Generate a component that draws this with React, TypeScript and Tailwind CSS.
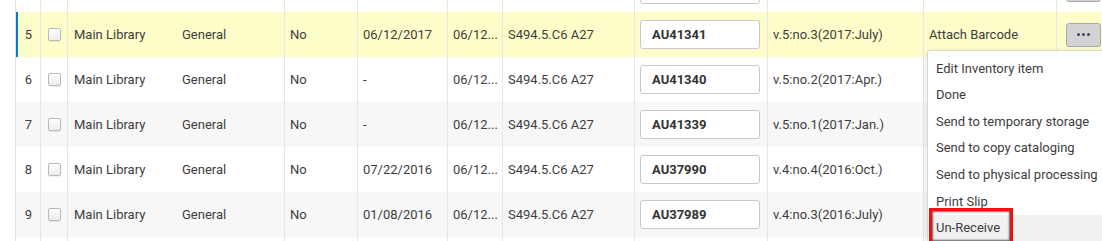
import React from "react";

type Row = {
  n: number;
  date: string;
  barcode: string;
  desc: string;
  process: string;
  bg: string;
  active?: boolean;
  hidden?: boolean;
};

const rows: Row[] = [
  { n: 4, date: "", barcode: "", desc: "", process: "", bg: "bg-white", hidden: true },
  { n: 5, date: "06/12/2017", barcode: "AU41341", desc: "v.5:no.3(2017:July)", process: "Attach Barcode", bg: "bg-[#fdfdca]", active: true },
  { n: 6, date: "-", barcode: "AU41340", desc: "v.5:no.2(2017:Apr.)", process: "", bg: "bg-white" },
  { n: 7, date: "-", barcode: "AU41339", desc: "v.5:no.1(2017:Jan.)", process: "", bg: "bg-[#f7f7f7]" },
  { n: 8, date: "07/22/2016", barcode: "AU37990", desc: "v.4:no.4(2016:Oct.)", process: "", bg: "bg-white" },
  { n: 9, date: "01/08/2016", barcode: "AU37989", desc: "v.4:no.3(2016:July)", process: "", bg: "bg-[#f7f7f7]" },
  { n: 10, date: "", barcode: "", desc: "", process: "", bg: "bg-white", hidden: true },
];

const menuItems = [
  "Edit Inventory item",
  "Done",
  "Send to temporary storage",
  "Send to copy cataloging",
  "Send to physical processing",
  "Print Slip",
  "Un-Receive",
];

function TableRow({ r }: { r: Row }) {
  const h = r.hidden;
  return (
    <div
      className={`flex h-[45px] items-center border-l border-[#e3e3e3] ${r.bg} ${
        r.active ? "shadow-[inset_2px_0_0_#0b78c3]" : ""
      }`}
    >
      <div className="flex h-full w-[25px] shrink-0 items-center justify-center border-r border-[#e6e6e6] pl-[1px]">
        {h ? "" : r.n}
      </div>
      <div className="flex h-full w-[27px] shrink-0 items-center justify-center border-r border-[#e6e6e6] pl-[1px]">
        <div className="h-[13px] w-[13px] rounded-[2px] border border-[#b9b9b9] bg-gradient-to-b from-white to-[#ececec] shadow-[0_1px_1px_rgba(0,0,0,0.08)]" />
      </div>
      <div className="flex h-full w-[108px] shrink-0 items-center pl-[6px]">{h ? "" : "Main Library"}</div>
      <div className="flex h-full w-[109px] shrink-0 items-center border-r border-[#e6e6e6] pl-[6px]">{h ? "" : "General"}</div>
      <div className="flex h-full w-[73px] shrink-0 items-center border-r border-[#e6e6e6] pl-[5px]">{h ? "" : "No"}</div>
      <div className="flex h-full w-[90px] shrink-0 items-center border-r border-[#e6e6e6] pl-[5px]">{r.date}</div>
      <div className="flex h-full w-[55px] shrink-0 items-center overflow-hidden whitespace-nowrap border-r border-[#e6e6e6] pl-[5px]">
        {h ? "" : "06/12..."}
      </div>
      <div className="flex h-full w-[132px] shrink-0 items-center border-r border-[#e6e6e6] pl-[5px]">{h ? "" : "S494.5.C6 A27"}</div>
      <div className="flex h-full w-[133px] shrink-0 items-center border-r border-[#e6e6e6] pl-[5px]">
        <div className="flex h-[29px] w-[120px] items-center rounded-[3px] border border-[#c8c8c8] bg-white pl-[11px] font-bold text-[#333]">
          {r.barcode}
        </div>
      </div>
      <div className="flex h-full w-[156px] shrink-0 items-center border-r border-[#e6e6e6] pl-[5px]">{r.desc}</div>
      <div className="flex h-full w-[133px] shrink-0 items-center border-r border-[#e6e6e6] pl-[5px]">{r.process}</div>
      <div className="flex h-full w-[70px] shrink-0 items-center pl-[9px]">
        <div className="flex h-[24px] w-[35px] items-center justify-center gap-[2px] rounded-[3px] border border-[#a9a9a9] bg-[#d3d3d3]">
          <span className="h-[3px] w-[3px] rounded-full bg-[#3c4a5c]" />
          <span className="h-[3px] w-[3px] rounded-full bg-[#3c4a5c]" />
          <span className="h-[3px] w-[3px] rounded-full bg-[#3c4a5c]" />
        </div>
      </div>
    </div>
  );
}

export default function App() {
  return (
    <div
      className="relative h-[241px] w-[1102px] overflow-hidden bg-white text-[13px] text-[#3d3d3d]"
      style={{ fontFamily: "Roboto, 'Liberation Sans', sans-serif" }}
    >
      <div className="-mt-[33px] ml-[15px] w-[1200px]">
        {rows.map((r) => (
          <TableRow key={r.n} r={r} />
        ))}
      </div>

      <div className="absolute left-[927px] top-[50px] w-[190px] rounded-[3px] border border-[#d9d9d9] bg-white pt-[4px] shadow-[0_2px_6px_rgba(0,0,0,0.15)]">
        {menuItems.map((m, i) => (
          <div
            key={m}
            className={`flex h-[26.6px] items-center whitespace-nowrap pl-[8px] text-[#3d3d3d] ${
              i === menuItems.length - 1 ? "bg-[#f1f1f1]" : ""
            }`}
          >
            {m}
          </div>
        ))}
      </div>

      <div className="absolute left-[929px] top-[208px] h-[36px] w-[84px] border-[3px] border-[#ee1111] shadow-[inset_0_0_2px_1px_rgba(0,0,0,0.6)]" />
    </div>
  );
}
